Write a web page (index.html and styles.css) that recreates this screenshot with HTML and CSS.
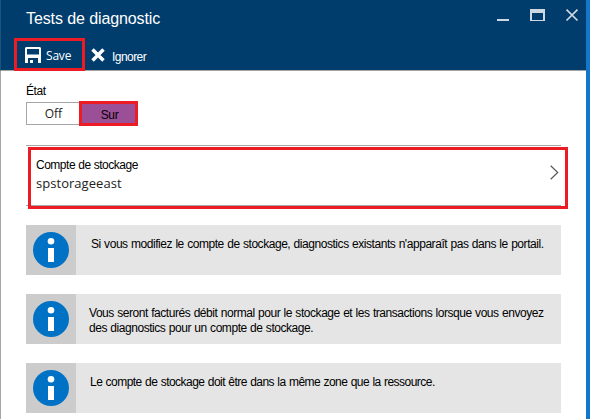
FILE: index.html
```html
<!DOCTYPE html>
<html lang="fr">
<head>
<meta charset="utf-8">
<title>Tests de diagnostic</title>
<link rel="stylesheet" href="styles.css">
</head>
<body>
<main class="blade">
  <header class="header">
    <div class="titlebar">
      <h1 class="title"><span>Tests de diagnostic</span></h1>
      <svg class="window-controls" width="84" height="14" viewBox="0 0 84 14">
        <path d="M0 10h12v2H0z" fill="#ccd8e2"/>
        <path d="M33 0h15v12H33zM35 4v7h11V4z" fill="#ccd8e2" fill-rule="evenodd"/>
        <path d="M69.500.700l11 10.800M80.500.700l-11 10.800" fill="none" stroke="#ccd8e2" stroke-width="1.700"/>
      </svg>
    </div>
    <div class="toolbar">
      <button class="save">
        <svg width="16" height="16" viewBox="0 0 16 16"><path d="M1 0h14l1 1v15h-3v-5H3v5H0V1zM2 2v5.500h12V2zM5 13h3v3H5z" fill="#fff" fill-rule="evenodd"/></svg>
        <span>Save</span>
      </button>
      <button class="discard">
        <svg width="14" height="14" viewBox="0 0 14 14"><path d="M1.500 1.500l11 11M12.500 1.500l-11 11" stroke="#fff" stroke-width="3.500"/></svg>
        <span>Ignorer</span>
      </button>
    </div>
  </header>
  <section class="content">
    <div class="label">État</div>
    <div class="toggle">
      <div class="off">Off</div>
      <div class="on">Sur</div>
    </div>
    <div class="picker">
      <div class="picker-box">
        <div>
          <div class="picker-label">Compte de stockage</div>
          <div class="picker-value">spstorageeast</div>
        </div>
        <svg class="chevron" width="9" height="15" viewBox="0 0 9 15"><path d="M.7.700l7 6.800-7 6.800" fill="none" stroke="#555" stroke-width="1.200"/></svg>
      </div>
    </div>
    <div class="notice">
      <div class="notice-icon"><svg width="36" height="36" viewBox="0 0 36 36"><circle cx="18" cy="18" r="18" fill="#0072c6"/><circle cx="18" cy="9.300" r="3.300" fill="#fff"/><path d="M15 16h6v14h-6z" fill="#fff"/></svg></div>
      <p class="n1"><span>Si vous modifiez le compte de stockage, diagnostics existants n'apparaît pas dans le portail.</span></p>
    </div>
    <div class="notice">
      <div class="notice-icon"><svg width="36" height="36" viewBox="0 0 36 36"><circle cx="18" cy="18" r="18" fill="#0072c6"/><circle cx="18" cy="9.300" r="3.300" fill="#fff"/><path d="M15 16h6v14h-6z" fill="#fff"/></svg></div>
      <p class="n2"><span>Vous seront facturés débit normal pour le stockage et les transactions lorsque vous envoyez</span><br><span>des diagnostics pour un compte de stockage.</span></p>
    </div>
    <div class="notice">
      <div class="notice-icon"><svg width="36" height="36" viewBox="0 0 36 36"><circle cx="18" cy="18" r="18" fill="#0072c6"/><circle cx="18" cy="9.300" r="3.300" fill="#fff"/><path d="M15 16h6v14h-6z" fill="#fff"/></svg></div>
      <p class="n3"><span>Le compte de stockage doit être dans la même zone que la ressource.</span></p>
    </div>
  </section>
</main>
</body>
</html>
```
FILE: styles.css
```css
* { box-sizing: border-box; }
body {
  margin: 0;
  background: #fff;
  color: #000;
  font: 12px/15px "Liberation Sans", Arial, sans-serif;
}
.blade {
  height: 419px;
  overflow: hidden;
  border-right: 4px solid #1277cb;
}
.header {
  height: 71px;
  background: #003c6c;
  border-left: 1px solid #1d527d;
  border-bottom: 1px solid #a6a6a6;
  color: #fff;
}
.titlebar {
  display: flex;
  justify-content: space-between;
  height: 38px;
  padding: 9px 5px 0 25px;
}
.title {
  margin: 0;
  font-size: 16px;
  line-height: 20px;
  font-weight: 400;
  letter-spacing: -0.1px;
}
.toolbar { display: flex; padding-left: 13px; }
button {
  display: flex;
  align-items: center;
  margin: 0;
  padding: 0;
  border: 0;
  background: none;
  color: inherit;
  font: inherit;
}
.save {
  position: relative;
  width: 71px;
  height: 33px;
  padding: 1px 0 0 8px;
  gap: 5px;
  border: 3px solid #ed1c24;
  font: 12px/16px "Open Sans", "Noto Sans", sans-serif;
}
.save span { padding-top: 1px; letter-spacing: -0.2px; }
.discard { height: 33px; margin-left: 6px; gap: 7px; }
.discard span { padding-top: 5px; letter-spacing: -0.55px; }
.content {
  height: 348px;
  padding: 13px 25px 0 25px;
  border-left: 1px solid #a6a6a6;
}
.label { height: 17px; letter-spacing: -0.4px; }
.toggle { display: flex; align-items: center; height: 25px; }
.off, .on { text-align: center; }
.off {
  width: 53px;
  height: 23px;
  padding-left: 1px;
  border: 1px solid #a6a6a6;
  border-right: 0;
  color: #222;
  font: 12px/21px "Open Sans", "Noto Sans", sans-serif;
}
.on {
  width: 59px;
  height: 25px;
  padding-left: 2px;
  border: 3px solid #ed1c24;
  background: #9b4f96;
  line-height: 22px;
  letter-spacing: -0.4px;
}
.picker {
  height: 61px;
  margin: 19px 0 19px;
  border-top: 1px solid #a6a6a6;
  border-bottom: 1px solid #a6a6a6;
}
.picker-box {
  position: relative;
  display: flex;
  justify-content: space-between;
  width: 540px;
  height: 62px;
  margin: 1px 0 0 2px;
  padding: 8px 6px 0 5px;
  border: 3px solid #ed1c24;
}
.picker-label { letter-spacing: -0.49px; word-spacing: 0.3px; }
.picker-value {
  color: #222;
  font: 13px/20px "Open Sans", "Noto Sans", sans-serif;
  letter-spacing: 0.04px;
}
.chevron { margin-top: 7px; }
.notice {
  display: flex;
  height: 50px;
  margin-bottom: 19px;
  background: #e5e5e5;
}
.notice-icon {
  display: flex;
  flex: none;
  align-items: center;
  justify-content: center;
  width: 50px;
  background: #ccc;
}
.notice p {
  margin: 0;
  padding: 12px 0 0 13px;
  white-space: nowrap;
  letter-spacing: -0.45px;
  word-spacing: 0.45px;
}
.notice .n1 { padding-left: 15px; }
.notice .n3 { padding-left: 14px; letter-spacing: -0.53px; word-spacing: 0.5px; }
```
